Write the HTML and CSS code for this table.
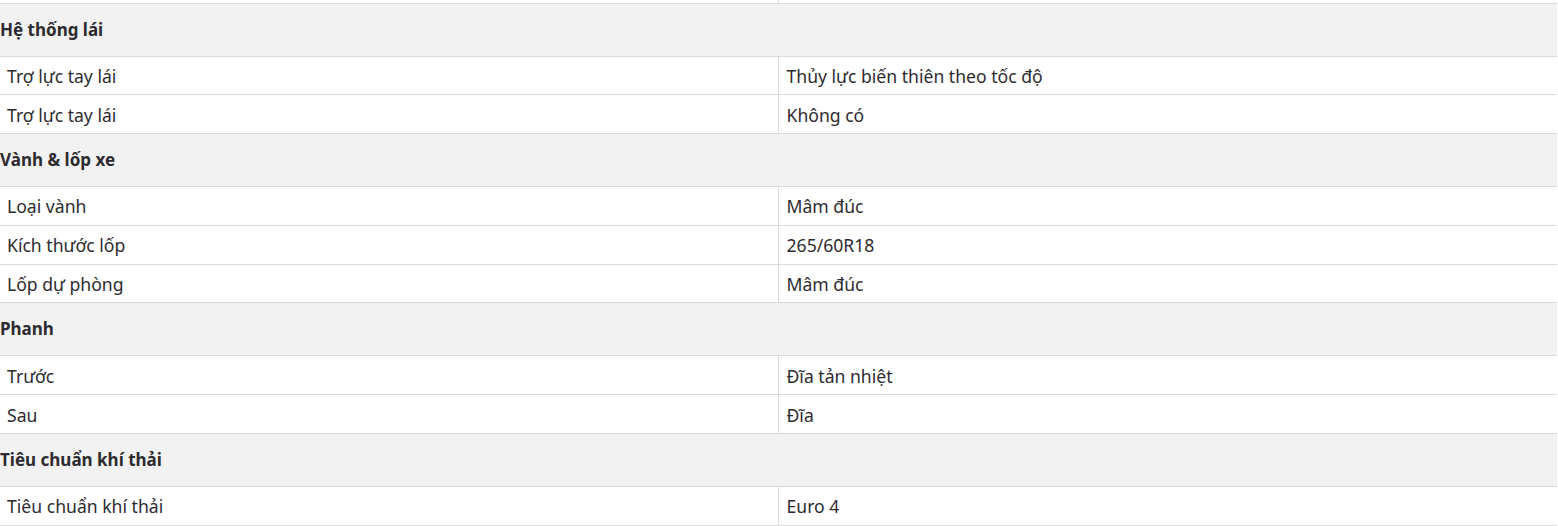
FILE: index.html
```html
<!DOCTYPE html>
<html lang="vi">
<head>
<meta charset="utf-8">
<link rel="stylesheet" href="styles.css">
</head>
<body>
<table class="spec">
  <colgroup><col class="c1"><col class="c2"></colgroup>
  <tbody>
    <tr class="stub"><td></td><td></td></tr>
    <tr class="group"><th colspan="2">Hệ thống lái</th></tr>
    <tr><td>Trợ lực tay lái</td><td>Thủy lực biến thiên theo tốc độ</td></tr>
    <tr><td>Trợ lực tay lái</td><td>Không có</td></tr>
    <tr class="group"><th colspan="2">Vành &amp; lốp xe</th></tr>
    <tr><td>Loại vành</td><td>Mâm đúc</td></tr>
    <tr><td>Kích thước lốp</td><td>265/60R18</td></tr>
    <tr><td>Lốp dự phòng</td><td>Mâm đúc</td></tr>
    <tr class="group"><th colspan="2">Phanh</th></tr>
    <tr><td>Trước</td><td>Đĩa tản nhiệt</td></tr>
    <tr><td>Sau</td><td>Đĩa</td></tr>
    <tr class="group"><th colspan="2">Tiêu chuẩn khí thải</th></tr>
    <tr><td>Tiêu chuẩn khí thải</td><td>Euro 4</td></tr>
  </tbody>
</table>
</body>
</html>
```
FILE: styles.css
```css
html, body {
  margin: 0;
  padding: 0;
  background: #fff;
}
body {
  font-family: "Noto Sans", "Open Sans", sans-serif;
  color: #2e2b30;
  overflow: hidden;
}
.spec {
  width: 1557px;
  border-collapse: collapse;
  table-layout: fixed;
}
.c1 { width: 778px; }
.spec td {
  height: 38.8px;
  padding: 1px 8px 0 7px;
  border-bottom: 1px solid #dadada;
  font-size: 17.6px;
  line-height: 22px;
  vertical-align: middle;
  box-sizing: border-box;
}
.spec td + td {
  border-left: 1px solid #dadada;
  padding-left: 8px;
}
.spec tr.stub td {
  height: 3px;
  padding: 0;
  line-height: 0;
}
.spec tr.group th {
  height: 52px;
  padding: 0;
  background: #f2f2f2;
  border-bottom: 1px solid #dadada;
  text-align: left;
  font-size: 17px;
  font-weight: 700;
  line-height: 22px;
  vertical-align: middle;
}
```
